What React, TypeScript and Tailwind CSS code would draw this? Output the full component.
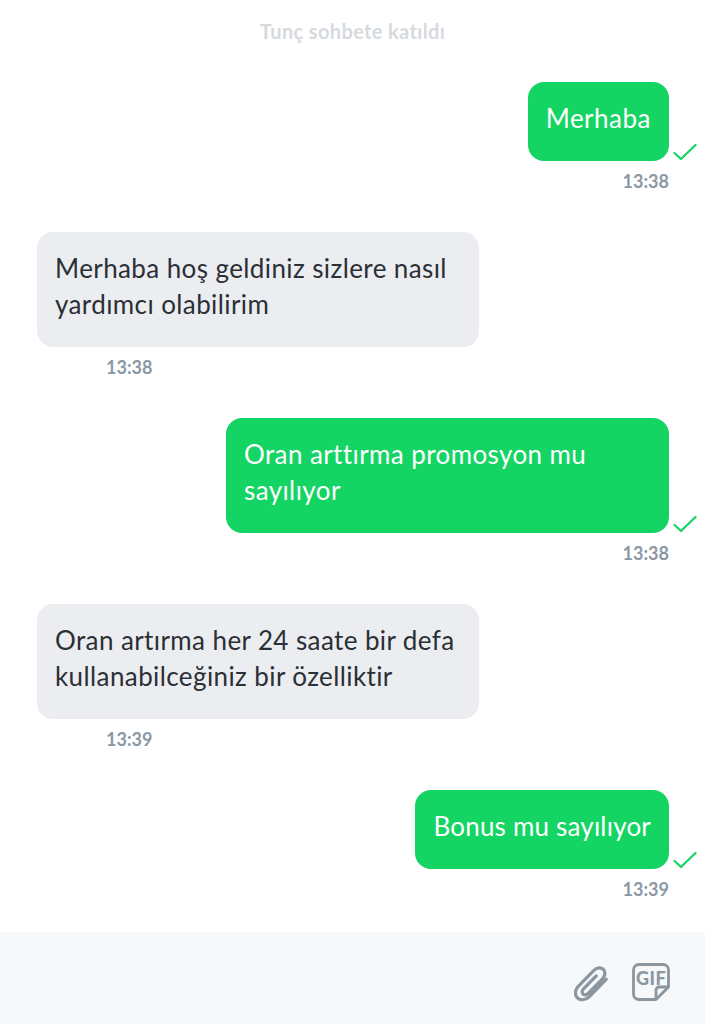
import React from "react";

const font = { fontFamily: '"Lato", "Noto Sans", sans-serif' };

const Check = () => (
  <svg width="24" height="18" viewBox="0 0 24 18" fill="none" className="absolute left-[calc(100%+4px)] bottom-0">
    <path d="M1.5 10 L8 16 L22.5 2" stroke="#14d464" strokeWidth="2.2" strokeLinecap="round" strokeLinejoin="round" />
  </svg>
);

const Sent = ({ text, time, className = "tracking-[0.4px]" }: { text: React.ReactNode; time: string; className?: string }) => (
  <div className="mt-[39px] flex flex-col items-end pr-9">
    <div className="relative">
      <div className={`rounded-[16px] bg-[#14d464] px-[18px] pb-[25.5px] pt-[17.5px] text-[26px] leading-9 text-white ${className}`}>
        {text}
      </div>
      <Check />
    </div>
    <div className="mt-2 text-[18px] font-bold leading-6 text-[#8a98a5]">{time}</div>
  </div>
);

const Received = ({ text, time }: { text: React.ReactNode; time: string }) => (
  <div className="mt-[39px] pl-[37px]">
    <div className="w-[442px] rounded-[16px] bg-[#ecedf1] px-[18px] pb-[25.5px] pt-[17.5px] text-[26px] leading-9 tracking-[0.4px] text-[#2b2f36]">{text}</div>
    <div className="mt-2 pl-[69px] text-[18px] font-bold leading-6 text-[#8a98a5]">{time}</div>
  </div>
);

export default function App() {
  return (
    <div className="flex h-[1024px] w-[705px] flex-col overflow-hidden bg-white" style={font}>
      <div className="flex-1">
        <div className="pt-[19px] text-center text-[20px] font-bold leading-6 tracking-[0.35px] text-[#d6dade]">Tunç sohbete katıldı</div>
        <Sent className="tracking-[0.5px]" text="Merhaba" time="13:38" />
        <Received text={<>Merhaba hoş geldiniz sizlere nasıl<br />yardımcı olabilirim</>} time="13:38" />
        <Sent className="w-[443px] tracking-[0.4px]" text={<>Oran arttırma promosyon mu<br />sayılıyor</>} time="13:38" />
        <Received text={<>Oran artırma her 24 saate bir defa<br />kullanabilceğiniz bir özelliktir</>} time="13:39" />
        <Sent className="tracking-[0.2px]" text="Bonus mu sayılıyor" time="13:39" />
      </div>
      <div className="flex h-[92px] items-center justify-end gap-[22px] bg-[#f6f8fa] pr-[35px] pt-[8px]">
        <svg width="36" height="38" viewBox="0 0 38 38" fill="none" stroke="#8b969e" strokeWidth="3.4" strokeLinecap="round" strokeLinejoin="round" className="mt-[3px]">
          <path d="M34 14 L16 32.5 C12 36.5 6 36.5 3.5 33.5 C0.5 30.5 1 25 4.5 21.5 L21 4.5 C24 1.5 28.5 1 31 3.5 C33.5 6 33 10.5 30 13.5 L15 29 C13.2 30.8 10.8 31 9.5 29.5 C8.2 28.2 8.5 25.8 10 24.2 L23.5 10.5" />
        </svg>
        <div className="relative h-[38px] w-[38px]">
          <svg width="38" height="38" viewBox="0 0 38 38" fill="none" stroke="#8b969e" strokeWidth="2.8" strokeLinejoin="round" className="absolute inset-0">
            <path d="M7 1.5 H31 A5.5 5.5 0 0 1 36.5 7 V24 L24 36.5 H7 A5.5 5.5 0 0 1 1.5 31 V7 A5.5 5.5 0 0 1 7 1.5 Z" />
            <path d="M36.5 24 H27 A3 3 0 0 0 24 27 V36.5" />
          </svg>
          <div className="absolute left-0 right-0 top-[5px] text-center text-[18px] font-black leading-[20px] tracking-[0.5px] text-[#8b969e]">GIF</div>
        </div>
      </div>
    </div>
  );
}
